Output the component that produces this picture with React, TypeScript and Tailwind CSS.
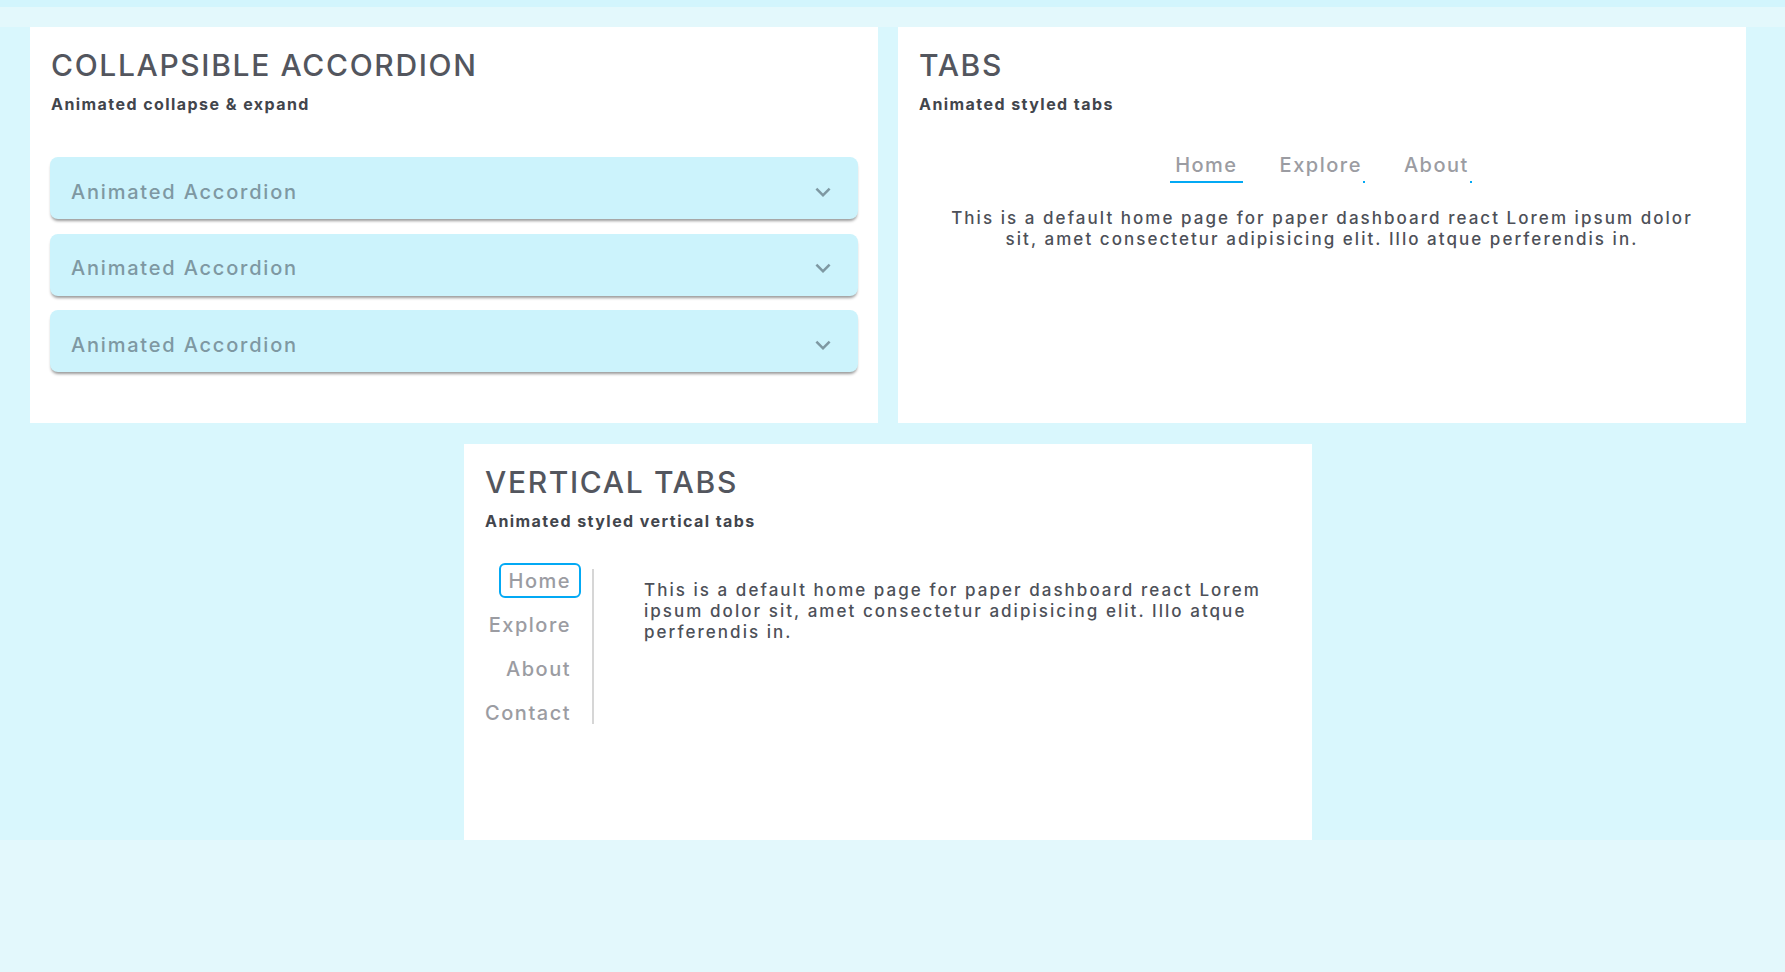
import { useState } from "react";

const ExpandMore = () => (
  <svg viewBox="0 0 24 24" className="h-[30px] w-[30px] fill-[#7e98a2]">
    <path d="M16.59 8.59 12 13.17 7.41 8.59 6 10l6 6 6-6z" />
  </svg>
);

const CardHeader = ({ title, subtitle }: { title: string; subtitle: string }) => (
  <div className="pl-[1px]">
    <h2 className="text-[30px] leading-[36px] font-medium tracking-[0.055em] text-[#53565e]">
      {title}
    </h2>
    <p className="mt-[9px] text-[16px] leading-[24px] font-bold tracking-[0.09em] text-[#42454c]">
      {subtitle}
    </p>
  </div>
);

const lorem =
  "This is a default home page for paper dashboard react Lorem ipsum dolor sit, amet consectetur adipisicing elit. Illo atque perferendis in.";

const AccordionCard = () => (
  <div className="w-[848px] h-[396px] bg-white px-[20px] pt-[20px]">
    <CardHeader title="COLLAPSIBLE ACCORDION" subtitle="Animated collapse & expand" />
    <div className="mt-[41px] flex flex-col gap-[14.5px]">
      {[0, 1, 2].map((i) => (
        <div
          key={i}
          className="h-[62px] rounded-[8px] bg-[#ccf3fc] shadow-[0_3px_3px_-1px_rgba(0,0,0,0.4)] flex items-center justify-between pl-[21px] pr-[20px] pt-[7px]"
        >
          <span className="text-[20px] leading-[28px] font-medium tracking-[0.09em] text-[#7e98a2]">
            Animated Accordion
          </span>
          <ExpandMore />
        </div>
      ))}
    </div>
  </div>
);

const TabsCard = () => {
  const [active, setActive] = useState("Home");
  return (
    <div className="w-[848px] h-[396px] bg-white px-[20px] pt-[20px]">
      <CardHeader title="TABS" subtitle="Animated styled tabs" />
      <div className="mt-[35px] flex justify-center gap-[32px]">
        {["Home", "Explore", "About"].map((t) => (
          <button
            key={t}
            onClick={() => setActive(t)}
            className="relative px-[5px] pb-[4px] text-[20px] leading-[28px] font-medium tracking-[0.075em] text-[#9b9ca2]"
          >
            {t}
            <span
              className={
                active === t
                  ? "absolute bottom-0 right-0 h-[2px] w-full bg-[#03a9f4]"
                  : "absolute bottom-0 right-[2px] h-[2px] w-[2px] bg-[#03a9f4]"
              }
            />
          </button>
        ))}
      </div>
      <p className="mt-[25px] px-[22px] text-center text-[17px] leading-[21px] font-medium tracking-[0.12em] text-[#4d5058]">
        {lorem}
      </p>
    </div>
  );
};

const VerticalTabsCard = () => {
  const [active, setActive] = useState("Home");
  return (
    <div className="w-[848px] h-[396px] bg-white px-[20px] pt-[20px]">
      <CardHeader title="VERTICAL TABS" subtitle="Animated styled vertical tabs" />
      <div className="mt-[30px] flex">
        <div className="w-[97px] flex flex-col items-end gap-[9px]">
          {["Home", "Explore", "About", "Contact"].map((t) => (
            <button
              key={t}
              onClick={() => setActive(t)}
              className={
                active === t
                  ? "h-[35px] px-[8px] rounded-[6px] border-2 border-[#03a9f4] text-[20px] leading-[28px] font-medium tracking-[0.075em] text-[#9b9ca2]"
                  : "h-[35px] px-[8px] rounded-[6px] border-2 border-transparent text-[20px] leading-[28px] font-medium tracking-[0.075em] text-[#9b9ca2]"
              }
            >
              {t}
            </button>
          ))}
        </div>
        <div className="ml-[11px] mt-[6px] w-[2px] h-[155px] bg-[#d6d6d6]" />
        <p className="flex-1 pl-[50px] pt-[17px] text-[17px] leading-[21px] font-medium tracking-[0.12em] text-[#4d5058]">
          {lorem}
        </p>
      </div>
    </div>
  );
};

export default function App() {
  return (
    <div className="min-h-screen bg-[#e3f8fc] font-['Inter',sans-serif]">
      <div className="h-[7px] bg-[#d2f5fd]" />
      <div className="h-[20px]" />
      <div className="bg-[#d9f7fd] pl-[30px] pr-[39px] flex flex-wrap justify-center gap-x-[20px] gap-y-[21px]">
        <AccordionCard />
        <TabsCard />
        <VerticalTabsCard />
      </div>
    </div>
  );
}
